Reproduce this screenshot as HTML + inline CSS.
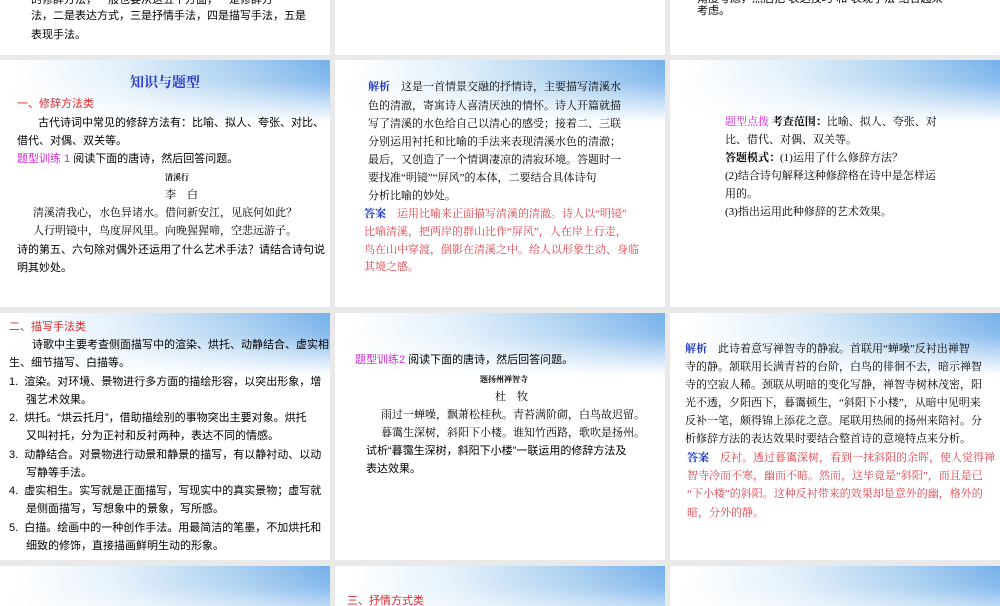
<!DOCTYPE html>
<html><head><meta charset="utf-8">
<style>
*{margin:0;padding:0;box-sizing:border-box}
body{width:1000px;height:600px;overflow:hidden;background:#e9e9e9;position:relative;font-family:"Liberation Serif","Noto Serif CJK SC",serif;color:#000}
.s{position:absolute;background:#fff;overflow:hidden}
.hd{position:absolute;left:0;top:0;width:100%;height:62px;background:linear-gradient(100deg,#ffffff 5%,#e3f0fb 35%,#a9cff0 70%,#6fadea 100%)}
.hd:after{content:"";position:absolute;left:0;top:0;width:100%;height:100%;background:linear-gradient(to bottom,rgba(255,255,255,0) 0%,rgba(255,255,255,0.15) 35%,#fff 100%)}
.l{position:absolute;white-space:nowrap;font-size:11px;line-height:14px}
.r{color:#e0262a}.m{color:#d42ad4}.b{color:#1a35c8;font-weight:bold}.k{font-weight:bold}
.p{color:#e0404a}
.sans{font-family:"Liberation Sans","Noto Sans CJK SC",sans-serif}
</style></head><body>

<!-- row 0 -->
<div class="s" style="left:0;top:0;width:330px;height:55px">
<div class="l sans" style="left:31px;top:-7px">的修辞方法，一般也要从这五个方面，一是修辞方</div>
<div class="l sans" style="left:31px;top:9px">法，二是表达方式，三是抒情手法，四是描写手法，五是</div>
<div class="l sans" style="left:31px;top:28px">表现手法。</div>
</div>
<div class="s" style="left:335px;top:0;width:330px;height:55px"></div>
<div class="s" style="left:670px;top:0;width:330px;height:55px">
<div class="l sans" style="left:27px;top:-8px">角度考虑，然后把“表达技巧”和“表现手法”结合起来</div>
<div class="l sans" style="left:27px;top:4px">考虑。</div>
</div>

<!-- row 1 -->
<div class="s" style="left:0;top:60px;width:330px;height:247px"><div class="hd"></div>
<div class="l" style="left:0;width:330px;text-align:center;top:15px;font-size:14px;line-height:18px;color:#2a3ad0;font-weight:bold">知识与题型</div>
<div class="l r sans" style="left:17px;top:37px">一、修辞方法类</div>
<div class="l sans" style="left:38px;top:56px">古代诗词中常见的修辞方法有：比喻、拟人、夸张、对比、</div>
<div class="l sans" style="left:17px;top:74px">借代、对偶、双关等。</div>
<div class="l sans" style="left:17px;top:92px"><span class="m">题型训练 1</span> 阅读下面的唐诗，然后回答问题。</div>
<div class="l k" style="left:165px;top:111px;font-size:8px">清溪行</div>
<div class="l" style="left:165px;top:128px">李　白</div>
<div class="l" style="left:33px;top:146px">清溪清我心，水色异诸水。借问新安江，见底何如此？</div>
<div class="l" style="left:33px;top:164px">人行明镜中，鸟度屏风里。向晚猩猩啼，空悲远游子。</div>
<div class="l sans" style="left:17px;top:183px">诗的第五、六句除对偶外还运用了什么艺术手法？请结合诗句说</div>
<div class="l sans" style="left:17px;top:201px">明其妙处。</div>
</div>

<div class="s" style="left:335px;top:60px;width:330px;height:247px"><div class="hd"></div>
<div class="l" style="left:33px;top:20px"><span class="b">解析</span>　这是一首情景交融的抒情诗，主要描写清溪水</div>
<div class="l" style="left:33px;top:39px">色的清澈，寄寓诗人喜清厌浊的情怀。诗人开篇就描</div>
<div class="l" style="left:33px;top:57px">写了清溪的水色给自己以清心的感受；接着二、三联</div>
<div class="l" style="left:33px;top:75px">分别运用衬托和比喻的手法来表现清溪水色的清澈；</div>
<div class="l" style="left:33px;top:93px">最后，又创造了一个情调凄凉的清寂环境。答题时一</div>
<div class="l" style="left:33px;top:111px">要找准“明镜”“屏风”的本体，二要结合具体诗句</div>
<div class="l" style="left:33px;top:129px">分析比喻的妙处。</div>
<div class="l p" style="left:29px;top:147px"><span class="b">答案</span>　运用比喻来正面描写清溪的清澈。诗人以“明镜”</div>
<div class="l p" style="left:29px;top:165px">比喻清溪，把两岸的群山比作“屏风”，人在岸上行走，</div>
<div class="l p" style="left:29px;top:183px">鸟在山中穿渡，倒影在清溪之中。给人以形象生动、身临</div>
<div class="l p" style="left:29px;top:200px">其境之感。</div>
</div>

<div class="s" style="left:670px;top:60px;width:330px;height:247px"><div class="hd"></div>
<div class="l" style="left:55px;top:55px"><span class="m">题型点拨</span> <b>考查范围：</b>比喻、拟人、夸张、对</div>
<div class="l" style="left:55px;top:73px">比、借代、对偶、双关等。</div>
<div class="l" style="left:55px;top:91px"><b>答题模式：</b>(1)运用了什么修辞方法？</div>
<div class="l" style="left:55px;top:109px">(2)结合诗句解释这种修辞格在诗中是怎样运</div>
<div class="l" style="left:55px;top:127px">用的。</div>
<div class="l" style="left:55px;top:145px">(3)指出运用此种修辞的艺术效果。</div>
</div>

<!-- row 2 -->
<div class="s" style="left:0;top:313px;width:330px;height:247px"><div class="hd"></div>
<div class="l r sans" style="left:9px;top:7px">二、描写手法类</div>
<div class="l sans" style="left:32px;top:25px">诗歌中主要考查侧面描写中的渲染、烘托、动静结合、虚实相</div>
<div class="l sans" style="left:9px;top:43px">生、细节描写、白描等。</div>
<div class="l sans" style="left:9px;top:62px">1.&nbsp;&nbsp;渲染。对环境、景物进行多方面的描绘形容，以突出形象，增</div>
<div class="l sans" style="left:26px;top:80px">强艺术效果。</div>
<div class="l sans" style="left:9px;top:98px">2.&nbsp;&nbsp;烘托。“烘云托月”，借助描绘别的事物突出主要对象。烘托</div>
<div class="l sans" style="left:26px;top:116px">又叫衬托，分为正衬和反衬两种，表达不同的情感。</div>
<div class="l sans" style="left:9px;top:135px">3.&nbsp;&nbsp;动静结合。对景物进行动景和静景的描写，有以静衬动、以动</div>
<div class="l sans" style="left:26px;top:153px">写静等手法。</div>
<div class="l sans" style="left:9px;top:171px">4.&nbsp;&nbsp;虚实相生。实写就是正面描写，写现实中的真实景物；虚写就</div>
<div class="l sans" style="left:26px;top:189px">是侧面描写，写想象中的景象，写所感。</div>
<div class="l sans" style="left:9px;top:208px">5.&nbsp;&nbsp;白描。绘画中的一种创作手法。用最简洁的笔墨，不加烘托和</div>
<div class="l sans" style="left:26px;top:226px">细致的修饰，直接描画鲜明生动的形象。</div>
</div>

<div class="s" style="left:335px;top:313px;width:330px;height:247px"><div class="hd"></div>
<div class="l sans" style="left:20px;top:40px"><span class="m">题型训练2</span> 阅读下面的唐诗，然后回答问题。</div>
<div class="l k" style="left:145px;top:60px;font-size:8px">题扬州禅智寺</div>
<div class="l" style="left:160px;top:77px">杜　牧</div>
<div class="l" style="left:46px;top:95px">雨过一蝉噪，飘萧松桂秋。青苔满阶砌，白鸟故迟留。</div>
<div class="l" style="left:46px;top:113px">暮霭生深树，斜阳下小楼。谁知竹西路，歌吹是扬州。</div>
<div class="l sans" style="left:31px;top:131px">试析“暮霭生深树，斜阳下小楼”一联运用的修辞方法及</div>
<div class="l sans" style="left:31px;top:149px">表达效果。</div>
</div>

<div class="s" style="left:670px;top:313px;width:330px;height:247px"><div class="hd"></div>
<div class="l" style="left:15px;top:29px"><span class="b">解析</span>　此诗着意写禅智寺的静寂。首联用“蝉噪”反衬出禅智</div>
<div class="l" style="left:15px;top:47px">寺的静。颔联用长满青苔的台阶，白鸟的徘徊不去，暗示禅智</div>
<div class="l" style="left:15px;top:65px">寺的空寂人稀。颈联从明暗的变化写静，禅智寺树林茂密，阳</div>
<div class="l" style="left:15px;top:83px">光不透，夕阳西下，暮霭顿生，“斜阳下小楼”，从暗中见明来</div>
<div class="l" style="left:15px;top:101px">反补一笔，颇得锦上添花之意。尾联用热闹的扬州来陪衬。分</div>
<div class="l" style="left:15px;top:119px">析修辞方法的表达效果时要结合整首诗的意境特点来分析。</div>
<div class="l p" style="left:17px;top:138px"><span class="b">答案</span>　反衬。透过暮霭深树，看到一抹斜阳的余晖，使人觉得禅</div>
<div class="l p" style="left:17px;top:156px">智寺冷而不寒，幽而不暗。然而，这毕竟是“斜阳”，而且是已</div>
<div class="l p" style="left:17px;top:174px">“下小楼”的斜阳。这种反衬带来的效果却是意外的幽，格外的</div>
<div class="l p" style="left:17px;top:193px">暗，分外的静。</div>
</div>

<!-- row 3 -->
<div class="s" style="left:0;top:566px;width:330px;height:40px"><div class="hd"></div></div>
<div class="s" style="left:335px;top:566px;width:330px;height:40px"><div class="hd"></div>
<div class="l r sans" style="left:12px;top:28px">三、抒情方式类</div></div>
<div class="s" style="left:670px;top:566px;width:330px;height:40px"><div class="hd"></div></div>
</body></html>
